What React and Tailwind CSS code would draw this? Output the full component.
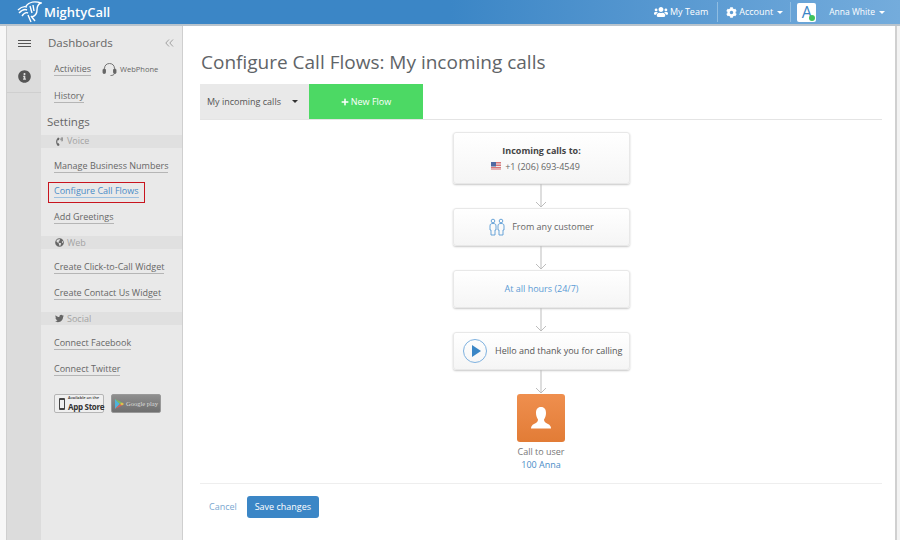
import React from 'react';
import { FaUsers, FaCog, FaInfoCircle, FaTwitter, FaGlobeAmericas, FaPlus, FaPhoneVolume } from 'react-icons/fa';

const font = { fontFamily: '"Open Sans", sans-serif' };

const Caret = ({ className }) => (
    <span className={`inline-block w-0 h-0 border-x-[3px] border-x-transparent border-t-[3px] ${className}`} />
);

const NavLink = ({ children, active }) => (
    <div className="h-[25.5px] flex items-center pl-[13px] whitespace-nowrap">
        <span className={`text-[9px] leading-[12px] border-b ${active ? 'text-[#4a8cc7] border-[#9dc0df]' : 'text-[#666] border-[#b5b5b5]'}`}>
            {children}
        </span>
    </div>
);

const Band = ({ icon, children }) => (
    <div className="h-[13px] my-[6px] bg-[#e0e0e0] flex items-center pl-[13px] gap-[3px] text-[9px] text-[#a3a3a3]">
        <span className="w-[10px] flex justify-center text-[#666]">{icon}</span>
        {children}
    </div>
);

// grey arrow joining two flow cards
const Arrow = ({ h }) => (
    <svg width="12" height={h} viewBox={`0 0 12 ${h}`} className="block">
        <path d={`M6 0V${h - 1}M1 ${h - 6}L6 ${h - 1}L11 ${h - 6}`} fill="none" stroke="#bdbdbd" strokeWidth="1" />
    </svg>
);

const Card = ({ className, children }) => (
    <div className={`w-[177px] ml-px rounded-[3px] border border-[#e8e8e8] bg-gradient-to-b from-white to-[#f5f5f5] shadow-[0_1px_2px_rgba(0,0,0,0.22)] flex items-center whitespace-nowrap ${className}`}>
        {children}
    </div>
);

const Logo = () => (
    <svg width="25" height="22" viewBox="0 0 25 22" fill="none" stroke="#fff" strokeWidth="1.4" className="block">
        <path d="M1 9C4 6 7 5 10 6M2 12C5 9 8 8 10 9M5 15C7 12 9 11 11 12" />
        <path d="M9 5C12 1 18 0 24 2C21 3 20 6 20 9C20 13 18 15 15 16" />
        <path d="M13 5L15 12M16 4L17 10M11 14L14 21M14 15L18 20" />
    </svg>
);

const FlowPeople = () => (
    <svg width="16" height="18" viewBox="0 0 16 18" fill="none" stroke="#5a9bd5" strokeWidth="0.9" className="block">
        <circle cx="4" cy="3" r="1.8" />
        <circle cx="12" cy="3" r="1.8" />
        <path d="M1 8C1 6 2 5.500 4 5.500C6 5.500 7 6 7 8V12H6V17H2V12H1Z" />
        <path d="M9 8C9 6 10 5.500 12 5.500C14 5.500 15 6 15 8V12H14V17H10V12H9Z" />
    </svg>
);

const Bust = () => (
    <svg width="22" height="22" viewBox="0 0 22 22" fill="#fff" className="block">
        <path d="M11 0C7.500 0 6 2.500 6 6C6 9 7 11 8 12.500C8 14.500 7 15.500 4 17C2 18 1 19.500 1 21.500H21C21 19.500 20 18 18 17C15 15.500 14 14.500 14 12.500C15 11 16 9 16 6C16 2.500 14.500 0 11 0Z" />
    </svg>
);

const Flag = () => (
    <svg width="10" height="8" viewBox="0 0 10 8" className="block">
        <rect width="10" height="8" fill="#d9777a" />
        <rect y="1.500" width="10" height="1" fill="#eee" />
        <rect y="4" width="10" height="1" fill="#eee" />
        <rect y="6.500" width="10" height="1" fill="#eee" />
        <rect width="5" height="4.500" fill="#4f6aa3" />
    </svg>
);

const Headset = () => (
    <svg width="15" height="15" viewBox="0 0 15 15" fill="none" stroke="#666" strokeWidth="0.9" className="block">
        <path d="M2.500 8V6.500C2.500 3.500 4.500 1.500 7.500 1.500C10.500 1.500 12.500 3.500 12.500 6.500V8" />
        <rect x="1" y="7" width="2.500" height="4.500" rx="1" fill="#666" />
        <rect x="11.500" y="7" width="2.500" height="4.500" rx="1" fill="#666" />
        <path d="M12.500 11.500C12 13 10.500 13.500 8.500 13.500" />
    </svg>
);

const GooglePlay = () => (
    <svg width="9" height="10" viewBox="0 0 9 10" className="block shrink-0">
        <path d="M0 0L5 5L0 10Z" fill="#4fb3d9" />
        <path d="M0 0L7 3.500L5 5Z" fill="#7cbf5a" />
        <path d="M0 10L7 6.500L5 5Z" fill="#d9605a" />
        <path d="M7 3.500L9 5L7 6.500L5 5Z" fill="#e8c04a" />
    </svg>
);

const App = () => {
    return (
        <div className="w-[900px] h-[540px] overflow-hidden flex flex-col bg-[#f7f7f7]" style={font}>
            {/* top bar */}
            <header className="h-[26px] shrink-0 flex items-center bg-gradient-to-r from-[#3b86c6] from-50% to-[#74acdc] border-b-2 border-[#b9c4cd] text-white">
                <div className="ml-[17px]"><Logo /></div>
                <span className="ml-[2px] text-[13px] font-semibold leading-none">MightyCall</span>
                <div className="ml-auto flex items-center h-full text-[9px]">
                    <FaUsers className="text-[14px] mr-[2px]" />
                    <span>My Team</span>
                    <div className="w-px h-[20px] bg-[#8fbde2] ml-[9px] mr-[8px]" />
                    <FaCog className="text-[11px] mr-[2px]" />
                    <span>Account</span>
                    <Caret className="ml-[4px] border-t-white" />
                    <div className="w-px h-[20px] bg-[#8fbde2] ml-[7px] mr-[6px]" />
                    <div className="relative w-[19px] h-[19px] rounded-[2px] bg-white flex items-center justify-center text-[#3b86c6] text-[16px] leading-none">
                        A
                        <span className="absolute right-[1px] bottom-[1px] w-[6px] h-[6px] rounded-full bg-[#3fc45a]" />
                    </div>
                    <span className="ml-[13px] text-[8.500px]">Anna White</span>
                    <Caret className="ml-[4px] mr-[15px] border-t-white" />
                </div>
            </header>

            <div className="flex-1 flex min-h-0">
                {/* sidebar */}
                <aside className="ml-[6px] w-[177px] shrink-0 flex border-x border-[#cfcfcf] bg-[#e9e9e9]">
                    <div className="w-[34px] shrink-0 bg-[#dcdcdc] flex flex-col">
                        <div className="h-[34px] bg-[#e9e9e9] flex items-center justify-center">
                            <div className="w-[13px] flex flex-col gap-[2px]">
                                <span className="h-px bg-[#555]" />
                                <span className="h-px bg-[#555]" />
                                <span className="h-px bg-[#555]" />
                            </div>
                        </div>
                        <div className="h-[33px] border-b border-[#cfcfcf] flex items-center justify-center text-[#555] text-[13px]">
                            <FaInfoCircle />
                        </div>
                    </div>
                    <nav className="flex-1 flex flex-col">
                        <div className="h-[24px] mt-[5px] flex items-center pl-[7px] pr-[8px] justify-between text-[11.500px] text-[#666]">
                            Dashboards
                            <svg width="9" height="8" viewBox="0 0 9 8" fill="none" stroke="#999" strokeWidth="0.9" className="block">
                                <path d="M4 0.500L0.800 4L4 7.500M8 0.500L4.800 4L8 7.500" />
                            </svg>
                        </div>
                        <div className="h-[29px] flex items-center pl-[13px] whitespace-nowrap">
                            <span className="text-[9px] leading-[12px] text-[#666] border-b border-[#b5b5b5]">Activities</span>
                            <span className="ml-[11px] mr-[3px]"><Headset /></span>
                            <span className="text-[7.500px] text-[#666]">WebPhone</span>
                        </div>
                        <NavLink>History</NavLink>
                        <div className="h-[19px] pt-[5px] flex items-center pl-[6px] text-[11.500px] text-[#666]">Settings</div>
                        <Band icon={<FaPhoneVolume className="text-[9px]" />}>Voice</Band>
                        <NavLink>Manage Business Numbers</NavLink>
                        <div className="relative">
                            <NavLink active>Configure Call Flows</NavLink>
                            <div className="absolute left-[7px] top-[3px] w-[97px] h-[21px] border border-[#c8141e]" />
                        </div>
                        <NavLink>Add Greetings</NavLink>
                        <Band icon={<FaGlobeAmericas className="text-[9px]" />}>Web</Band>
                        <NavLink>Create Click-to-Call Widget</NavLink>
                        <NavLink>Create Contact Us Widget</NavLink>
                        <Band icon={<FaTwitter className="text-[9px]" />}>Social</Band>
                        <NavLink>Connect Facebook</NavLink>
                        <NavLink>Connect Twitter</NavLink>
                        <div className="mt-[12px] pl-[13px] flex gap-[7px]">
                            <div className="w-[50px] h-[19px] rounded-[2px] bg-[#efefef] border border-[#b5b5b5] flex items-center pl-[4px] gap-[3px] text-[#333] whitespace-nowrap">
                                <span className="w-[6px] h-[12px] rounded-[1px] border border-[#444] border-y-2 shrink-0" />
                                <div className="flex flex-col">
                                    <span className="text-[4px] leading-[6px] font-semibold">Available on the</span>
                                    <span className="text-[8px] leading-[11px] font-bold tracking-[-0.3px]">App Store</span>
                                </div>
                            </div>
                            <div className="w-[50px] h-[19px] rounded-[2px] bg-gradient-to-b from-[#8f8f8f] to-[#6f6f6f] border border-[#999] flex items-center pl-[3px] gap-[2px] text-[#ddd] text-[6.500px] whitespace-nowrap" style={{ fontFamily: '"Liberation Serif", serif' }}>
                                <GooglePlay />
                                Google play
                            </div>
                        </div>
                    </nav>
                </aside>

                {/* main content */}
                <main className="w-[712px] shrink-0 bg-white pl-[17px] pr-[13px] flex flex-col">
                    <h1 className="mt-[22px] h-[29px] pl-px text-[19px] font-normal leading-[29px] text-[#5f6468]">Configure Call Flows: My incoming calls</h1>
                    <div className="mt-[7px] flex border-b border-[#e4e4e4] h-[36px]">
                        <div className="w-[109px] bg-[#e9e9e9] flex items-center pl-[7px] text-[9px] text-[#555]">
                            My incoming calls
                            <Caret className="ml-[11px] border-t-[#333]" />
                        </div>
                        <div className="w-[114px] bg-[#4cd964] flex items-center justify-center text-white text-[9px] font-medium gap-[2px]">
                            <FaPlus className="text-[8px]" />
                            New Flow
                        </div>
                    </div>

                    <div className="flex flex-col items-center mt-[12px]">
                        <Card className="h-[52px] flex-col justify-center">
                            <div className="text-[9px] font-bold text-[#444] leading-[13px]">Incoming calls to:</div>
                            <div className="mt-[3px] mr-[12px] flex items-center gap-[4px] text-[9px] text-[#666] leading-[13px]">
                                <Flag />
                                +1 (206) 693-4549
                            </div>
                        </Card>
                        <Arrow h={24} />
                        <Card className="h-[38px] justify-center gap-[7px] text-[9px] text-[#666]">
                            <FlowPeople />
                            From any customer
                        </Card>
                        <Arrow h={24} />
                        <Card className="h-[38px] justify-center text-[9px] text-[#5b9bd5]">At all hours (24/7)</Card>
                        <Arrow h={24} />
                        <Card className="h-[38px] pl-[9px] gap-[8px] text-[9px] text-[#555]">
                            <span className="w-[24px] h-[24px] rounded-full border border-[#7fb2e0] flex items-center justify-center">
                                <span className="ml-[2px] w-0 h-0 border-y-[6px] border-y-transparent border-l-[9px] border-l-[#3b86c6]" />
                            </span>
                            Hello and thank you for calling
                        </Card>
                        <Arrow h={24} />
                        <div className="w-[48px] h-[48px] rounded-[3px] bg-gradient-to-b from-[#ef8f4e] to-[#e27c36] flex items-center justify-center">
                            <Bust />
                        </div>
                        <div className="mt-[3px] text-[9px] leading-[13px] text-[#777]">Call to user</div>
                        <div className="text-[9px] leading-[13px] text-[#4a8cc7]">100 Anna</div>
                    </div>

                    <div className="mt-[12px] border-t border-[#eee] flex items-center pt-[12px]">
                        <span className="ml-[9px] text-[9px] text-[#7aa7d0]">Cancel</span>
                        <button className="ml-[10px] w-[72px] h-[22px] rounded-[3px] bg-[#3b86c6] text-white text-[9px]">Save changes</button>
                    </div>
                </main>

                <div className="flex-1 border-l-2 border-[#d0d0d0] bg-[#f3f3f3]" />
            </div>
        </div>
    );
};

export default App;
